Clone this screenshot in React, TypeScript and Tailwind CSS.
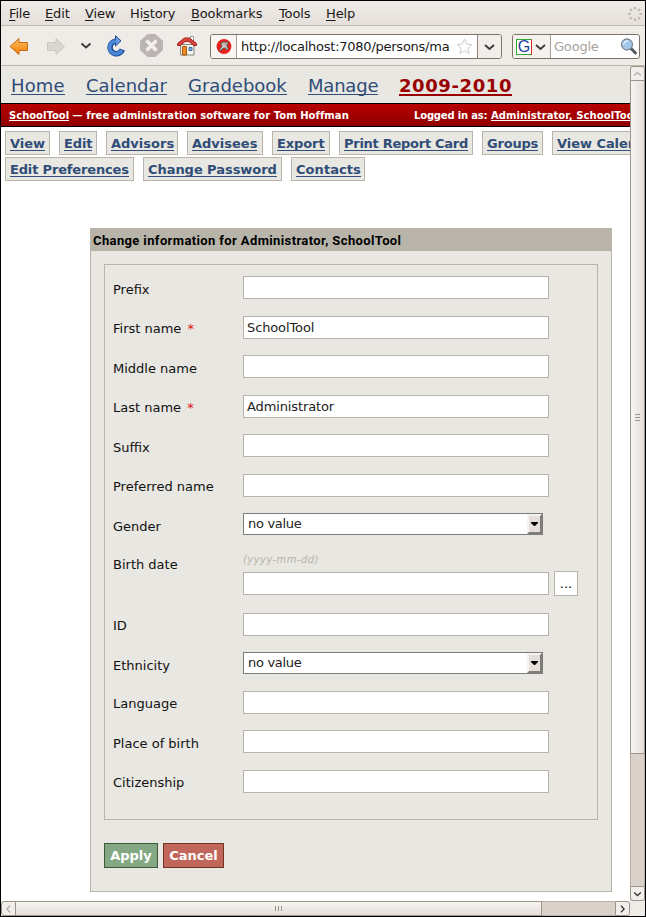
import React from 'react';

const tabsTop = [
  { t: 'View', w: 'w-[45px]', ls: 'tracking-[0px]' },
  { t: 'Edit', w: 'w-[38px]', ls: 'tracking-[-0.1px]' },
  { t: 'Advisors', w: 'w-[72px]', ls: 'tracking-[0px]' },
  { t: 'Advisees', w: 'w-[76px]', ls: 'tracking-[0px]' },
  { t: 'Export', w: 'w-[58px]', ls: 'tracking-[-0.1px]' },
  { t: 'Print Report Card', w: 'w-[134px]', ls: 'tracking-[-0.27px]' },
  { t: 'Groups', w: 'w-[61px]', ls: 'tracking-[-0.2px]' },
  { t: 'View Calendar', w: 'w-[110px]', ls: 'tracking-[-0.05px]' },
];
const tabsBottom = [
  { t: 'Edit Preferences', w: 'w-[129px]', ls: 'tracking-[-0.16px]' },
  { t: 'Change Password', w: 'w-[139px]', ls: 'tracking-[-0.05px]' },
  { t: 'Contacts', w: 'w-[74px]', ls: 'tracking-[0.05px]' },
];

type Tab = { t: string; w: string; ls: string };
function TabRow({ items }: { items: Tab[] }) {
  return (
    <div className="flex h-6 gap-[9px] pl-1">
      {items.map((i) => (
        <div key={i.t} className={`${i.w} flex h-6 shrink-0 items-start border border-[#b8b4a9] bg-[#e8e7e1] pt-[3px] pl-1`}>
          <a className={`h-[16px] border-b border-[#2f4d77] text-[13px] leading-[17px] font-bold whitespace-nowrap text-[#2f4d77] ${i.ls}`}>{i.t}</a>
        </div>
      ))}
    </div>
  );
}

type Field = { label: string; h: string; pt: string; kind?: 'select' | 'date'; req?: boolean; value?: string };
const fields: Field[] = [
  { label: 'Prefix', h: 'h-[40px]', pt: 'pt-[6px]' },
  { label: 'First name', h: 'h-[39px]', pt: 'pt-[5px]', req: true, value: 'SchoolTool' },
  { label: 'Middle name', h: 'h-[40px]', pt: 'pt-[6px]' },
  { label: 'Last name', h: 'h-[39px]', pt: 'pt-[5px]', req: true, value: 'Administrator' },
  { label: 'Suffix', h: 'h-[40px]', pt: 'pt-[6px]' },
  { label: 'Preferred name', h: 'h-[39px]', pt: 'pt-[5px]' },
  { label: 'Gender', h: 'h-[40px]', pt: 'pt-[6px]', kind: 'select' },
  { label: 'Birth date', h: 'h-[60px]', pt: 'pt-[4px]', kind: 'date' },
  { label: 'ID', h: 'h-[39px]', pt: 'pt-[5px]' },
  { label: 'Ethnicity', h: 'h-[39px]', pt: 'pt-[6px]', kind: 'select' },
  { label: 'Language', h: 'h-[39px]', pt: 'pt-[5px]' },
  { label: 'Place of birth', h: 'h-[40px]', pt: 'pt-[6px]' },
  { label: 'Citizenship', h: 'h-[39px]', pt: 'pt-[5px]' },
];

function TextBox({ value }: { value?: string }) {
  return (
    <div className="h-[23px] w-[306px] border border-[#b8b4a9] bg-white pl-[3px] text-[13px] leading-[21px] tracking-[-0.12px] text-[#222]">{value}</div>
  );
}
function SelectBox() {
  return (
    <div className="flex h-[22px] w-[300px] justify-between border border-[#7f7d79] bg-white pl-1 text-[13px] leading-[20px] tracking-[-0.3px] text-[#222]">
      <span>no value</span>
      <span className="flex h-5 w-[15px] items-center justify-center border-2 border-t-[#f6f4f2] border-r-[#7f7d79] border-b-[#7f7d79] border-l-[#f6f4f2] bg-[#e6ded9]">
        <svg width="7" height="4" viewBox="0 0 7 4" className="shrink-0"><path d="M0 0h7v1L4 4H3L0 1z" fill="#000" /></svg>
      </span>
    </div>
  );
}
function FieldRow({ f }: { f: Field }) {
  return (
    <div className={`flex ${f.h}`}>
      <div className={`w-[130px] shrink-0 text-[13px] leading-4 whitespace-pre text-[#111] ${f.pt}`}>
        {f.label}
        {f.req && <span className="ml-[2px] text-[#e01010]"> *</span>}
      </div>
      {f.kind === 'select' && <SelectBox />}
      {f.kind === 'date' && (
        <div>
          <div className="h-[19px] text-[10px] leading-[13px] tracking-[0.45px] text-[#b8b4a9] italic">(yyyy-mm-dd)</div>
          <div className="-mt-px flex items-center gap-[5px]">
            <TextBox />
            <div className="h-[25px] w-6 border border-[#b8b4a9] bg-white text-center text-[13px] leading-[24px]">...</div>
          </div>
        </div>
      )}
      {!f.kind && <TextBox value={f.value} />}
    </div>
  );
}

const menus: [string, string, string, string][] = [
  ['', 'F', 'ile', 'w-[36px]'],
  ['', 'E', 'dit', 'w-[40px]'],
  ['', 'V', 'iew', 'w-[45px]'],
  ['Hi', 's', 'tory', 'w-[61px]'],
  ['', 'B', 'ookmarks', 'w-[88px]'],
  ['', 'T', 'ools', 'w-[47px]'],
  ['', 'H', 'elp', 'w-[40px]'],
];

function Chevron({ className = '', color = '#3b3b38' }: { className?: string; color?: string }) {
  return (
    <svg className={`shrink-0 ${className}`} width="11" height="8" viewBox="0 0 11 8">
      <path d="M1 2l4.500 4L10 2" fill="none" stroke={color} strokeWidth="1.900" />
    </svg>
  );
}

function Toolbar() {
  return (
    <div className="flex h-[40px] shrink-0 border-b border-[#beb6ac] bg-[#efebe7]">
      <svg width="204" height="39" viewBox="1 26 204 39" className="shrink-0">
        <defs>
          <linearGradient id="or" x1="0" y1="0" x2="0" y2="1"><stop offset="0" stopColor="#fcc068" /><stop offset="1" stopColor="#f57900" /></linearGradient>
        </defs>
        <path d="M10 46.5L19 38.5V42.5H27.5V50.5H19V54.5Z" fill="url(#or)" stroke="#c66a12" strokeLinejoin="round" />
        <path d="M64.500 46.5L56 38.5V42.500H47.500V50.500H56V54.500Z" fill="#d9d5cf" stroke="#ccc7c1" strokeLinejoin="round" />
        <path d="M81.500 43.500l4.500 4 4.500-4" fill="none" stroke="#3b3b38" strokeWidth="1.900" />
        <path d="M115.500 41.200A6.300 6.300 0 1 0 122.300 49.500" fill="none" stroke="#1b4a91" strokeWidth="5.600" />
        <path d="M115.500 35.800L121 40.800L115.500 46Z" fill="#6e9fe0" stroke="#1b4a91" strokeLinejoin="round" />
        <path d="M116.500 41.200H115A6.300 6.300 0 1 0 121.600 50" fill="none" stroke="#4a86d6" strokeWidth="3.600" />
        <path d="M147.500 34h8l7.500 7v9l-7.500 7h-8l-7.500-7V41z" fill="#bcb4b2" />
        <path d="M146.500 40.500l10 10M156.500 40.500l-10 10" stroke="#f2efec" strokeWidth="3.600" />
        <path d="M190.500 36.500h3v6h-3z" fill="#fff" stroke="#999" />
        <path d="M180.500 44.500h13.500v10.500h-13.500z" fill="#f4f3ef" stroke="#8a8780" />
        <path d="M177.500 45.500v-2l7-5.500h5l7 5.500v2h-3l-4.500-4h-4l-4.500 4z" fill="#d84440" stroke="#a8201c" strokeLinejoin="round" />
        <path d="M182.500 46.500h4v8.500h-4z" fill="#ef8a22" stroke="#a65a10" />
        <path d="M189 47.500h3v3h-3z" fill="#7eb2e6" stroke="#3d6e9f" />
      </svg>
      <div className="mt-2 ml-[5px] flex h-[25px] w-[292px] shrink-0 overflow-hidden rounded-[3px] border border-[#7c7266] bg-white">
        <svg width="26" height="23" viewBox="0 0 26 23" className="shrink-0 border-r border-[#a89f95] bg-[#f7f5f2]">
          <circle cx="13.500" cy="11.500" r="7.700" fill="#e8201a" />
          <path d="M10 8l3-1.500 2 .5 3-.5-.5 2.500-1 1 1.500 4-1.500 1.500-2-2.500-2 .5-3 3-.5-2 2.500-3z" fill="#b8b4ac" stroke="#4e4a48" strokeWidth=".8" />
          <path d="M12 10l3 2M10 14l4-3.500" stroke="#eee" strokeWidth=".7" />
        </svg>
        <div className="w-[214px] shrink-0 overflow-hidden pl-[4px] text-[13px] leading-[23px] tracking-[-0.25px] whitespace-nowrap text-[#1a1a1a]">http://localhost:7080/persons/ma</div>
        <svg width="26" height="23" viewBox="0 0 26 23" className="shrink-0">
          <path d="M13.500 4l2.200 5 5.300.5-4 3.600 1.200 5.400-4.700-2.800-4.700 2.800L10 13.100 6 9.500l5.300-.5z" fill="none" stroke="#cfcdca" />
        </svg>
        <div className="flex w-[24px] shrink-0 items-center justify-center border-l border-[#8d8479] bg-[#f1eeeb]"><Chevron /></div>
      </div>
      <div className="mt-2 ml-[10px] flex h-[25px] w-[128px] shrink-0 items-center overflow-hidden rounded-[3px] border border-[#7c7266] bg-white">
        <div className="flex h-full w-[38px] shrink-0 items-center border-r border-[#a89f95] bg-[#f4f1ee] pl-[3px]">
          <div className="flex h-4 w-4 shrink-0 items-center justify-center border border-t-[#2faa2f] border-r-[#dd2222] border-b-[#2faa2f] border-l-[#2faa2f] bg-white font-['Liberation_Sans',sans-serif] text-[16px] leading-4 text-[#1c3f9c]">G</div>
          <Chevron className="ml-[3px]" />
        </div>
        <div className="w-[69px] shrink-0 pl-[3px] text-[13px] tracking-[-0.2px] text-[#aaa29b]">Google</div>
        <svg width="18" height="19" viewBox="0 0 18 19" className="shrink-0">
          <path d="M11 11.500l4.500 4.500" stroke="#55575a" strokeWidth="3" strokeLinecap="round" />
          <circle cx="7" cy="7.500" r="5.500" fill="#a3c6ec" stroke="#7f8993" strokeWidth="1.300" />
          <path d="M3.500 7.500A4 4 0 0 1 8 4" fill="none" stroke="#e4f0fc" strokeWidth="1.500" />
        </svg>
      </div>
    </div>
  );
}

const sbBtn = 'flex shrink-0 items-center justify-center border border-[#9c958c] bg-[#f1eeeb]';

export default function App() {
  return (
    <div className="flex h-[917px] w-[646px] flex-col overflow-hidden border border-black bg-white font-['DejaVu_Sans',sans-serif]">
      <div className="flex h-[25px] shrink-0 border-b border-[#c4bbb0] bg-linear-to-b from-[#efebe7] to-[#e5dfda] pl-[8px] text-[13px] leading-[25px] text-[#1a1a1a]">
        {menus.map(([a, u, b, w]) => (
          <div key={a + u + b} className={`${w} shrink-0 tracking-[-0.15px] whitespace-nowrap`}>
            {a}<span className="underline underline-offset-[2px]">{u}</span>{b}
          </div>
        ))}
        <svg width="16" height="16" viewBox="0 0 16 16" className="mt-[5px] ml-[261px] shrink-0 text-[#bdb7b1]">
          <g stroke="currentColor" strokeWidth="2.200">
            <path d="M8 1v2.600M8 12.400V15M1 8h2.600M12.400 8H15M3 3l1.800 1.800M11.200 11.200L13 13M13 3l-1.800 1.800M4.800 11.200L3 13" />
          </g>
        </svg>
      </div>
      <Toolbar />
      <div className="flex h-[835px] shrink-0">
        <div className="w-[629px] shrink-0 overflow-hidden">
          <div className="flex h-[37px] items-start bg-[#e8e7e1] pt-[8px] pl-[10px] text-[18px] leading-[23px] text-[#2f4d77]">
            <div className="flex w-[75px] shrink-0"><a className="h-[21px] border-b border-[#2f4d77] tracking-[0.1px]">Home</a></div>
            <div className="flex w-[102px] shrink-0"><a className="h-[21px] border-b border-[#2f4d77]">Calendar</a></div>
            <div className="flex w-[120px] shrink-0"><a className="h-[21px] border-b border-[#2f4d77]">Gradebook</a></div>
            <div className="flex w-[91px] shrink-0"><a className="h-[21px] border-b border-[#2f4d77] tracking-[-0.2px]">Manage</a></div>
            <a className="h-[22px] border-b-2 border-[#990000] font-bold tracking-[0.6px] text-[#990000]">2009-2010</a>
          </div>
          <div className="flex h-6 border-y border-black bg-linear-to-b from-[#b80000] to-[#8f0000] pl-2 text-[10px] leading-[24px] font-bold whitespace-nowrap text-white">
            <div className="flex w-[405px] shrink-0 items-start">
              <a className="h-[17px] border-b border-white">SchoolTool</a>
              <span className="tracking-[0.06px] whitespace-pre"> — free administration software for Tom Hoffman</span>
            </div>
            <div className="flex shrink-0 items-start">
              <span className="w-[77px] tracking-[-0.18px]">Logged in as:</span>
              <a className="h-[17px] border-b border-white tracking-[0.08px]">Administrator, SchoolTool</a>
            </div>
          </div>
          <div className="flex flex-col gap-[2px] pt-1">
            <TabRow items={tabsTop} />
            <TabRow items={tabsBottom} />
          </div>
          <div className="mt-[47px] ml-[89px] h-[664px] w-[522px] border border-[#b8b4a9] bg-[#e8e7e1]">
            <h1 className="h-[22px] bg-[#b8b4a9] pl-[2px] font-[Roboto,sans-serif] text-[13px] leading-[23px] font-bold tracking-[0.38px] whitespace-nowrap text-black">Change information for Administrator, SchoolTool</h1>
            <div className="mt-[13px] ml-[13px] h-[556px] w-[494px] border border-[#b8b4a9] pt-[11px] pl-2">
              {fields.map((f) => <FieldRow key={f.label} f={f} />)}
            </div>
            <div className="mt-[23px] ml-[13px] flex gap-[5px] text-center text-[13px] leading-[23px] font-bold text-white">
              <button className="h-[25px] w-[54px] border border-[#3f5a36] bg-[#84a883]">Apply</button>
              <button className="h-[25px] w-[61px] border border-[#6f3422] bg-[#c1665b]">Cancel</button>
            </div>
          </div>
        </div>
        <div className="flex w-[15px] shrink-0 flex-col bg-[#dad1ca]">
          <div className={`${sbBtn} h-[15px] w-[15px] rounded-t-[3px]`}><Chevron className="scale-75 rotate-180" color="#b9b1a8" /></div>
          <div className="-mt-px flex h-[674px] w-[15px] flex-col items-center justify-center gap-[2px] border border-[#9c958c] bg-linear-to-r from-[#f7f5f3] to-[#e6ded9]">
            <i className="h-px w-[5px] bg-[#9c958c]" /><i className="h-px w-[5px] bg-[#9c958c]" /><i className="h-px w-[5px] bg-[#9c958c]" />
          </div>
          <div className="grow border-x border-[#b9afa5]" />
          <div className={`${sbBtn} h-[15px] w-[15px] rounded-b-[3px]`}><Chevron className="scale-75" /></div>
        </div>
      </div>
      <div className="flex h-[15px] shrink-0 bg-[#efebe7]">
        <div className={`${sbBtn} h-[15px] w-[15px] rounded-l-[3px]`}><Chevron className="scale-75 rotate-90" color="#b9b1a8" /></div>
        <div className="-ml-px flex h-[15px] w-[527px] items-center justify-center gap-[2px] border border-[#9c958c] bg-linear-to-b from-[#f7f5f3] to-[#e6ded9]">
          <i className="h-[5px] w-px bg-[#9c958c]" /><i className="h-[5px] w-px bg-[#9c958c]" /><i className="h-[5px] w-px bg-[#9c958c]" />
        </div>
        <div className="w-[73px] shrink-0 border-y border-[#b9afa5] bg-[#dad1ca]" />
        <div className={`${sbBtn} h-[15px] w-[15px] rounded-r-[3px]`}><Chevron className="scale-75 -rotate-90" /></div>
      </div>
    </div>
  );
}
